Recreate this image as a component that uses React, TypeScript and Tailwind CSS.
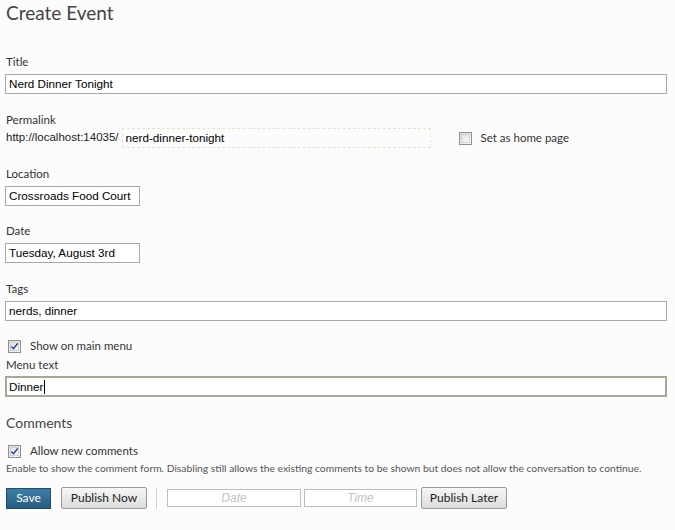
import React from "react";

const LABEL_FONT = { fontFamily: '"Segoe UI", Lato, "Open Sans", sans-serif' };
const INPUT_FONT = { fontFamily: '"Liberation Sans", Arial, sans-serif' };

function Box({ checked }: { checked?: boolean }) {
  return (
    <span className="relative inline-flex h-[13px] w-[13px] shrink-0 items-center justify-center border border-[#8f8f8f] bg-gradient-to-br from-[#dcdcdc] to-[#fbfbfb]">
      <span className="h-[9px] w-[9px] border border-[#d0d0d0] bg-gradient-to-br from-[#e4e4e4] to-[#f8f8f8]" />
      {checked ? (
        <svg viewBox="0 0 10 10" className="absolute left-[1px] top-[1px] h-[9px] w-[9px]">
          <path d="M1.5 5 L4 7.5 L8.5 1.5" fill="none" stroke="#2b3a9a" strokeWidth="1.6" />
        </svg>
      ) : null}
    </span>
  );
}

function Label({ children, className }: { children: React.ReactNode; className?: string }) {
  return (
    <div className={`pl-[1px] text-[11.5px] leading-[16px] text-[#333] ${className ?? ""}`} style={LABEL_FONT}>
      {children}
    </div>
  );
}

function TextBox({ value, width, className }: { value: string; width?: string; className?: string }) {
  return (
    <div
      className={`flex h-[20px] items-center border border-[#a9a9a9] bg-white px-[3px] text-[11.7px] text-black ${width ?? "w-[662px]"} ${className ?? ""}`}
      style={INPUT_FONT}
    >
      {value}
    </div>
  );
}

export default function App() {
  return (
    <div className="h-[530px] w-[675px] overflow-hidden bg-[#fcfcfc] pl-[5px]" style={LABEL_FONT}>
      <h1 className="pl-[1px] text-[19px] leading-[26px] font-normal text-[#444]">Create Event</h1>

      <Label className="mt-[28px]">Title</Label>
      <TextBox value="Nerd Dinner Tonight" className="mt-[4px]" />

      <Label className="mt-[18px]">Permalink</Label>
      <div className="flex h-[20px] items-center">
        <span className="pl-[1px] text-[11.5px] text-[#222]" style={INPUT_FONT}>
          http://localhost:14035/
        </span>
        <div
          className="ml-[3px] flex h-[20px] w-[309px] items-center border border-dashed border-[#e8e4c8] px-[3px] text-[11.7px] text-black"
          style={INPUT_FONT}
        >
          nerd-dinner-tonight
        </div>
        <span className="ml-[28px] flex items-center">
          <Box />
          <span className="ml-[9px] text-[11.5px] text-[#333]">Set as home page</span>
        </span>
      </div>

      <Label className="mt-[18px]">Location</Label>
      <TextBox value="Crossroads Food Court" width="w-[135px]" className="mt-[4px]" />

      <Label className="mt-[17px]">Date</Label>
      <TextBox value="Tuesday, August 3rd" width="w-[135px]" className="mt-[4px]" />

      <Label className="mt-[18px]">Tags</Label>
      <TextBox value="nerds, dinner" className="mt-[4px]" />

      <div className="mt-[17px] flex h-[16px] items-center pl-[3px]">
        <Box checked />
        <span className="ml-[9px] text-[11.5px] leading-[16px] text-[#333]">Show on main menu</span>
      </div>
      <Label className="mt-[3px]">Menu text</Label>
      <div
        className="mt-[3px] flex h-[21px] w-[662px] items-center border-2 border-[#a8a898] bg-white px-[2px] text-[11.7px] text-black"
        style={INPUT_FONT}
      >
        Dinner<span className="ml-[1px] h-[14px] w-[1px] bg-black" />
      </div>

      <h2 className="mt-[16px] pl-[1px] text-[14px] leading-[20px] font-normal text-[#444]">Comments</h2>

      <div className="mt-[10px] flex h-[16px] items-center pl-[3px]">
        <Box checked />
        <span className="ml-[9px] text-[11.5px] leading-[16px] text-[#333]">Allow new comments</span>
      </div>
      <div className="mt-[2px] pl-[1px] text-[10.3px] leading-[14px] text-[#555]">
        Enable to show the comment form. Disabling still allows the existing comments to be shown but does not allow the conversation to continue.
      </div>

      <div className="mt-[12px] flex items-center pl-[1px]">
        <button className="flex h-[21px] w-[45px] items-center justify-center border border-[#1f4c6b] bg-gradient-to-b from-[#3d7fa9] to-[#285b7f] text-[12px] text-white">
          Save
        </button>
        <button className="ml-[10px] flex h-[22px] w-[86px] items-center justify-center rounded-[2px] border border-[#9a9a9a] bg-gradient-to-b from-[#f7f7f7] to-[#dcdcdc] text-[12px] text-[#222]">
          Publish Now
        </button>
        <span className="ml-[9px] h-[21px] w-[1px] bg-[#d0d0d0]" />
        <div
          className="ml-[10px] flex h-[18px] w-[134px] items-center justify-center border border-[#bdbdbd] bg-white text-[12px] italic text-[#c4c4c4]"
          style={INPUT_FONT}
        >
          Date
        </div>
        <div
          className="ml-[3px] flex h-[18px] w-[113px] items-center justify-center border border-[#bdbdbd] bg-white text-[12px] italic text-[#c4c4c4]"
          style={INPUT_FONT}
        >
          Time
        </div>
        <button className="ml-[4px] flex h-[22px] w-[86px] items-center justify-center rounded-[2px] border border-[#9a9a9a] bg-gradient-to-b from-[#f7f7f7] to-[#dcdcdc] text-[12px] text-[#222]">
          Publish Later
        </button>
      </div>
    </div>
  );
}
